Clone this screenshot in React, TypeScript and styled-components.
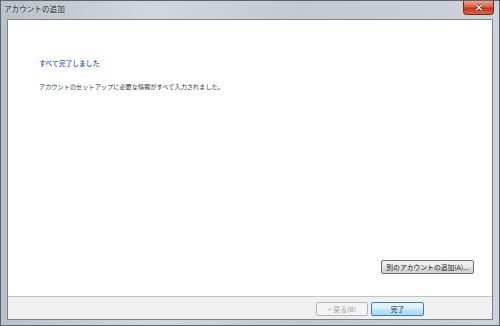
import styled, { createGlobalStyle } from 'styled-components'

const Reset = createGlobalStyle`
  html, body { margin: 0; padding: 0; background: #fff; }
  body { font-family: 'Noto Sans CJK JP', 'Noto Sans', sans-serif; }
`

const Window = styled.div`
  width: 500px;
  height: 326px;
  box-sizing: border-box;
  display: flex;
  flex-direction: column;
  border: 1px solid #5f646b;
  background: linear-gradient(90deg, #b9c1ca 0%, #d1d7de 30%, #c2c9d1 60%, #ccd2d9 100%);
`

const TitleBar = styled.div`
  height: 18px;
  display: flex;
  align-items: flex-start;
  justify-content: space-between;
  padding-left: 3px;
`

const Title = styled.div`
  margin-top: 2px;
  font-size: 7.6px;
  line-height: 12px;
  color: #1d1f22;
  text-shadow: 0 0 3px #eef1f4;
`

const CloseBtn = styled.div`
  width: 31px;
  height: 14px;
  margin-right: 5px;
  box-sizing: border-box;
  border: 1px solid #6b2a22;
  border-top: none;
  border-radius: 0 0 4px 4px;
  background: linear-gradient(180deg, #eba28e 0%, #dc5f46 45%, #c8301a 55%, #dc6448 100%);
  display: flex;
  align-items: center;
  justify-content: center;
  svg {
    width: 8px;
    height: 7px;
  }
`

const Client = styled.div`
  flex: 1;
  margin: 0 6px 5px 6px;
  border: 1px solid #7d838a;
  display: flex;
  flex-direction: column;
  background: #fff;
`

const Content = styled.div`
  flex: 1;
  display: flex;
  flex-direction: column;
  padding: 38px 18px 22px 31px;
`

const Heading = styled.div`
  font-size: 6.8px;
  line-height: 10px;
  color: #1f4fc0;
  font-weight: 500;
`

const Body = styled.div`
  margin-top: 14px;
  font-size: 6.2px;
  line-height: 10px;
  color: #333;
`

const Spacer = styled.div`
  flex: 1;
`

const RightRow = styled.div<{ $gap?: number }>`
  display: flex;
  justify-content: flex-end;
  gap: ${p => p.$gap ?? 0}px;
`

const Button = styled.div<{ $w: number; $variant?: 'default' | 'primary' | 'disabled' }>`
  width: ${p => p.$w}px;
  height: 14px;
  box-sizing: border-box;
  border-radius: 2px;
  display: flex;
  align-items: center;
  justify-content: center;
  font-size: 6.8px;
  color: ${p => (p.$variant === 'disabled' ? '#9a9a9a' : '#1a1a1a')};
  border: 1px solid
    ${p => (p.$variant === 'primary' ? '#3c7fb1' : p.$variant === 'disabled' ? '#b5b5b5' : '#707070')};
  background: ${p =>
    p.$variant === 'primary'
      ? 'linear-gradient(180deg, #eaf6fd 0%, #d9f0fc 45%, #bee6fd 55%, #a7d9f5 100%)'
      : p.$variant === 'disabled'
        ? '#f4f4f4'
        : 'linear-gradient(180deg, #f2f2f2 0%, #ebebeb 45%, #dddddd 55%, #cfcfcf 100%)'};
`

const Footer = styled.div`
  height: 23px;
  box-sizing: border-box;
  border-top: 1px solid #c4c4c4;
  background: #f0f0f0;
  display: flex;
  align-items: center;
  justify-content: flex-end;
  padding: 1px 68px 0 0;
`

export default function App() {
  return (
    <>
      <Reset />
      <Window>
        <TitleBar>
          <Title>アカウントの追加</Title>
          <CloseBtn>
            <svg viewBox="0 0 8 7">
              <path d="M1 0.8 L7 6.2 M7 0.8 L1 6.2" stroke="#3a1a14" strokeWidth="2.6" />
              <path d="M1 0.8 L7 6.2 M7 0.8 L1 6.2" stroke="#fff" strokeWidth="1.4" />
            </svg>
          </CloseBtn>
        </TitleBar>
        <Client>
          <Content>
            <Heading>すべて完了しました</Heading>
            <Body>アカウントのセットアップに必要な情報がすべて入力されました。</Body>
            <Spacer />
            <RightRow>
              <Button $w={93}>別のアカウントの追加(A)...</Button>
            </RightRow>
          </Content>
          <Footer>
            <RightRow $gap={3}>
              <Button $w={52} $variant="disabled">&lt; 戻る(B)</Button>
              <Button $w={53} $variant="primary">完了</Button>
            </RightRow>
          </Footer>
        </Client>
      </Window>
    </>
  )
}
